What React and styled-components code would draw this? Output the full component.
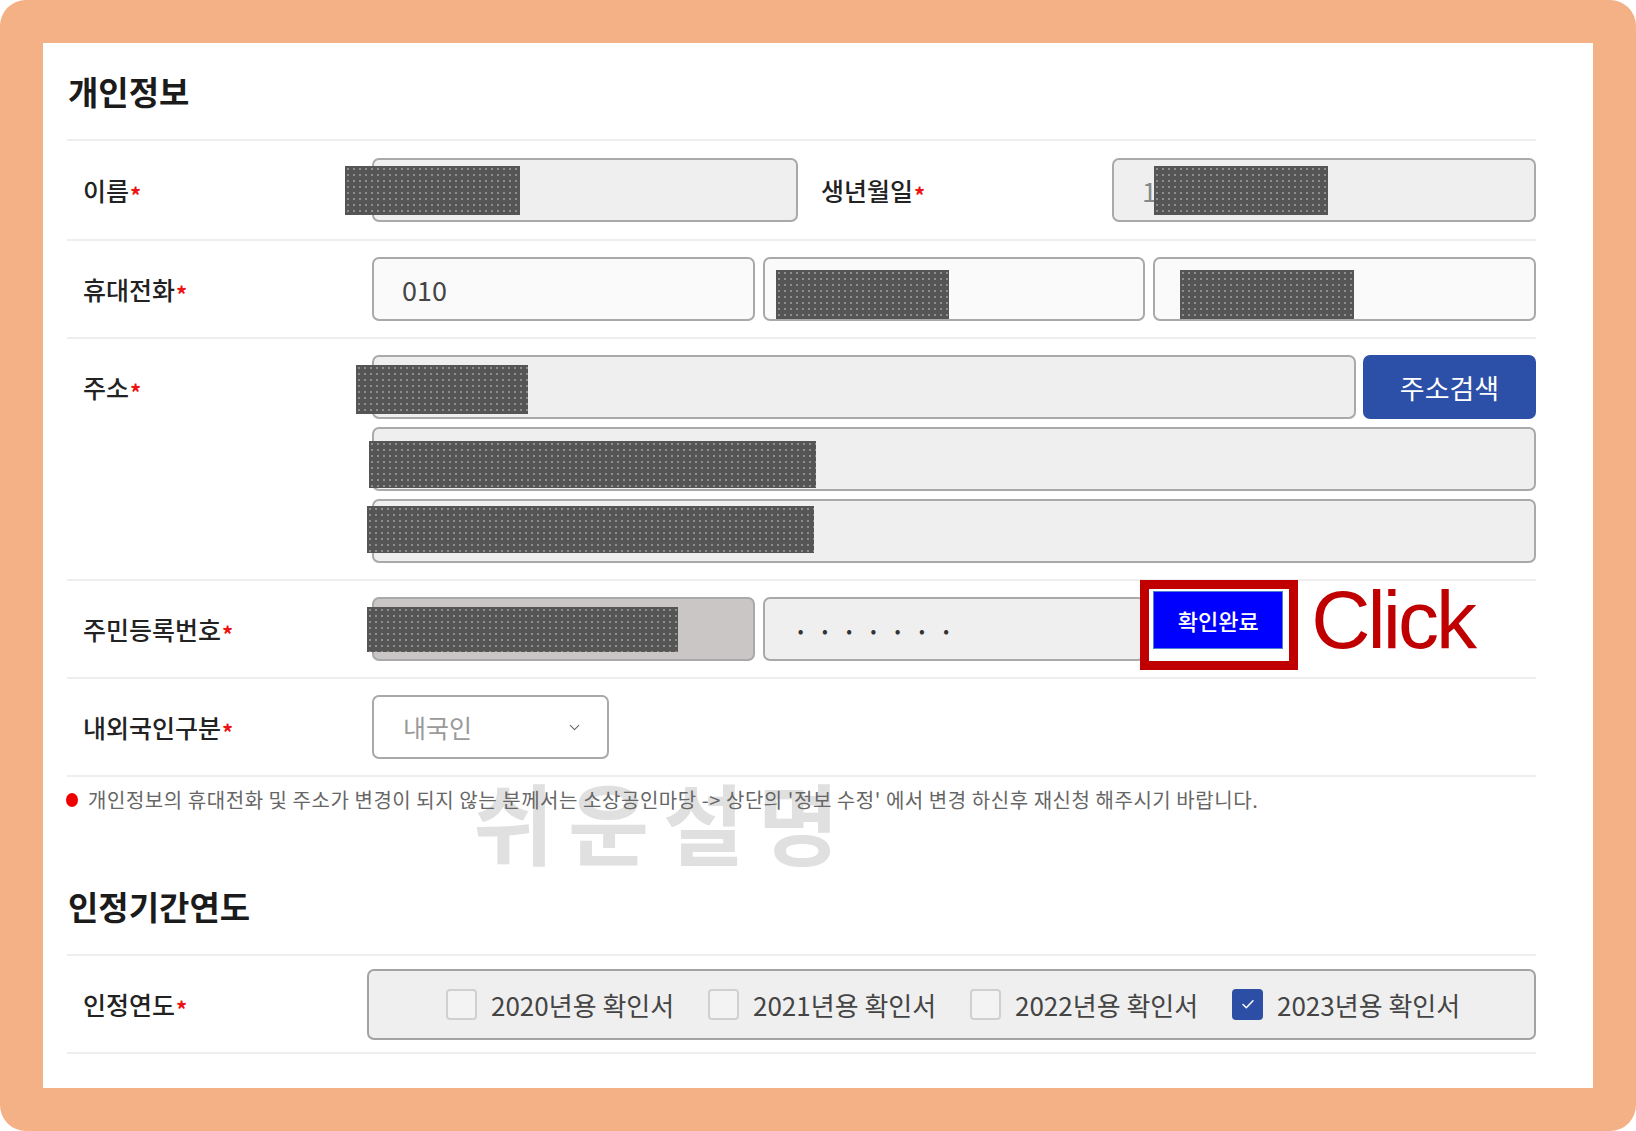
import React from 'react';
import styled, { createGlobalStyle } from 'styled-components';
import { ChevronDown } from 'lucide-react';

const GlobalStyle = createGlobalStyle`
  html, body {
    margin: 0;
    padding: 0;
    background: #ffffff;
  }
  body {
    font-family: "Noto Sans CJK KR", "Noto Sans", sans-serif;
  }
  * {
    box-sizing: border-box;
  }
`;

const Frame = styled.div`
  width: 1636px;
  height: 1131px;
  padding: 43px;
  background: #f3b185;
  border-radius: 26px;
`;

const Panel = styled.main`
  position: relative;
  height: 100%;
  padding: 0 57px 0 24px;
  background: #ffffff;
`;

const SectionTitle = styled.h2`
  display: flex;
  align-items: center;
  height: 98px;
  margin: ${p => p.$gap || 0}px 0 0;
  padding-left: 1px;
  font-size: 33px;
  font-weight: 700;
  color: #1b1b1b;
  border-bottom: 2px solid #eeeeee;
`;

const Row = styled.div`
  display: grid;
  grid-template-columns: 305px 1fr;
  align-items: ${p => (p.$top ? 'start' : 'center')};
  min-height: ${p => p.$min || 98}px;
  padding: ${p => p.$pad || '0'};
  border-bottom: 2px solid #eeeeee;
`;

const Label = styled.div`
  display: flex;
  align-items: center;
  height: 64px;
  padding-left: ${p => p.$indent ?? 16}px;
  font-size: 25px;
  font-weight: 500;
  color: #222222;
  white-space: nowrap;
`;

const Star = styled.span`
  display: inline-block;
  margin-left: 1px;
  font-size: 22px;
  font-weight: 700;
  line-height: 1;
  color: #ee1111;
  transform: translateY(4px);
`;

const SplitGrid = styled.div`
  display: grid;
  grid-template-columns: 426px 314px 1fr;
  align-items: center;
`;

const TripleGrid = styled.div`
  display: grid;
  grid-template-columns: repeat(3, 1fr);
  gap: 8px;
  align-items: center;
  align-self: ${p => (p.$stretch ? 'stretch' : 'auto')};
`;

const AddressGrid = styled.div`
  display: grid;
  grid-template-columns: 1fr 173px;
  gap: 8px 7px;
`;

const Field = styled.div`
  position: relative;
  display: flex;
  align-items: center;
  height: 64px;
  padding-left: ${p => p.$indent ?? 28}px;
  grid-column: ${p => (p.$full ? '1 / -1' : 'auto')};
  background: ${p => p.$bg || '#efefef'};
  border: 2px solid #a9a9a9;
  border-radius: 7px;
  font-size: 27px;
  color: ${p => p.$color || '#444444'};
`;

const Redact = styled.span`
  position: absolute;
  left: ${p => p.$l}px;
  top: ${p => p.$t}px;
  width: ${p => p.$w}px;
  height: ${p => p.$h || 49}px;
  background-color: #555555;
  background-image: radial-gradient(circle, #8d8d8d 0.8px, transparent 1.3px);
  background-size: 6px 6px;
`;

const Dots = styled.span`
  font-size: 17px;
  letter-spacing: 18.5px;
  color: #333333;
`;

const SearchButton = styled.button`
  height: 64px;
  border: none;
  border-radius: 7px;
  background: #2c50a7;
  color: #ffffff;
  font-family: inherit;
  font-size: 27px;
  font-weight: 400;
`;

const ConfirmCell = styled.div`
  position: relative;
  align-self: stretch;
  padding-top: 10px;
`;

const ConfirmButton = styled.button`
  display: block;
  width: 130px;
  height: 58px;
  border: 1px solid #4f7fd0;
  background: #0000ff;
  color: #ffffff;
  font-family: inherit;
  font-size: 22px;
  font-weight: 500;
`;

const Highlight = styled.span`
  position: absolute;
  left: -13px;
  top: -1px;
  width: 158px;
  height: 90px;
  border: 9px solid #c00000;
  pointer-events: none;
`;

const ClickNote = styled.span`
  position: absolute;
  left: 158px;
  top: -2px;
  font-family: "Liberation Sans", Arial, sans-serif;
  font-size: 82px;
  line-height: 1;
  letter-spacing: -3px;
  color: #c00000;
  white-space: nowrap;
`;

const Select = styled.div`
  display: flex;
  align-items: center;
  justify-content: space-between;
  width: 237px;
  height: 64px;
  padding: 0 24px 0 29px;
  background: #ffffff;
  border: 2px solid #a9a9a9;
  border-radius: 7px;
  font-size: 25px;
  color: #9a9a9a;
  svg {
    color: #666666;
  }
`;

const Notice = styled.p`
  position: relative;
  z-index: 1;
  display: flex;
  align-items: center;
  gap: 10px;
  margin: 0;
  padding: 12px 0 0 0;
  line-height: 22px;
  font-size: 20px;
  letter-spacing: 0.55px;
  color: #666666;
  white-space: nowrap;
`;

const RedDot = styled.span`
  flex: none;
  width: 12px;
  height: 14px;
  margin-left: -1px;
  border-radius: 50%;
  background: #ee0000;
`;

const Watermark = styled.span`
  position: absolute;
  left: 430px;
  top: 733px;
  z-index: 0;
  font-size: 88px;
  font-weight: 700;
  line-height: 1;
  letter-spacing: 14px;
  color: #e0e0e0;
  pointer-events: none;
`;

const YearBox = styled.div`
  display: grid;
  grid-auto-flow: column;
  grid-auto-columns: 262px;
  align-items: center;
  height: 71px;
  margin-left: -5px;
  padding-left: 77px;
  background: #efefef;
  border: 2px solid #a3a3a3;
  border-radius: 7px;
`;

const YearOption = styled.label`
  display: flex;
  align-items: center;
  gap: 14px;
  font-size: 26px;
  color: #444444;
  white-space: nowrap;
`;

const Box = styled.span`
  display: flex;
  align-items: center;
  justify-content: center;
  width: 31px;
  height: 31px;
  border: 2px solid ${p => (p.$on ? '#2c4fa5' : '#d0d0d0')};
  border-radius: 4px;
  background: ${p => (p.$on ? '#2c4fa5' : '#f3f3f3')};
`;

const years = [
  { y: 2020, on: false },
  { y: 2021, on: false },
  { y: 2022, on: false },
  { y: 2023, on: true },
];

function Req({ children }) {
  return (
    <>
      {children}
      <Star>*</Star>
    </>
  );
}

function App() {
  return (
    <>
      <GlobalStyle />
      <Frame>
        <Panel>
          <SectionTitle>개인정보</SectionTitle>

          <Row $min={100}>
            <Label><Req>이름</Req></Label>
            <SplitGrid>
              <Field>
                <Redact $l={-29} $t={6} $w={175} />
              </Field>
              <Label $indent={23}><Req>생년월일</Req></Label>
              <Field $indent={28} $color="#888888">
                1
                <Redact $l={40} $t={6} $w={174} />
              </Field>
            </SplitGrid>
          </Row>

          <Row>
            <Label><Req>휴대전화</Req></Label>
            <TripleGrid>
              <Field $bg="#fafafa">010</Field>
              <Field $bg="#fafafa">
                <Redact $l={11} $t={11} $w={173} />
              </Field>
              <Field $bg="#fafafa">
                <Redact $l={25} $t={11} $w={174} />
              </Field>
            </TripleGrid>
          </Row>

          <Row $top $pad="16px 0 16px">
            <Label><Req>주소</Req></Label>
            <AddressGrid>
              <Field>
                <Redact $l={-18} $t={8} $w={172} />
              </Field>
              <SearchButton type="button">주소검색</SearchButton>
              <Field $full>
                <Redact $l={-5} $t={12} $w={447} $h={47} />
              </Field>
              <Field $full>
                <Redact $l={-7} $t={5} $w={447} $h={47} />
              </Field>
            </AddressGrid>
          </Row>

          <Row>
            <Label><Req>주민등록번호</Req></Label>
            <TripleGrid $stretch>
              <Field $bg="#cac6c6">
                <Redact $l={-7} $t={8} $w={311} $h={45} />
              </Field>
              <Field $indent={33}>
                <Dots>•••••••</Dots>
              </Field>
              <ConfirmCell>
                <ConfirmButton type="button">확인완료</ConfirmButton>
                <Highlight />
                <ClickNote>Click</ClickNote>
              </ConfirmCell>
            </TripleGrid>
          </Row>

          <Row>
            <Label><Req>내외국인구분</Req></Label>
            <Select>
              내국인
              <ChevronDown size={17} strokeWidth={1.6} />
            </Select>
          </Row>

          <Watermark>쉬운설명</Watermark>
          <Notice>
            <RedDot />
            개인정보의 휴대전화 및 주소가 변경이 되지 않는 분께서는 소상공인마당 -&gt; 상단의 '정보 수정' 에서 변경 하신후 재신청 해주시기 바랍니다.
          </Notice>

          <SectionTitle $gap={47}>인정기간연도</SectionTitle>

          <Row>
            <Label><Req>인정연도</Req></Label>
            <YearBox>
              {years.map(item => (
                <YearOption key={item.y}>
                  <Box $on={item.on}>
                    {item.on && (
                      <svg width="18" height="18" viewBox="0 0 18 18" fill="none">
                        <path d="M4 9.5l3.3 3.3L14 5.8" stroke="#ffffff" strokeWidth="1.5" strokeLinecap="round" strokeLinejoin="round" />
                      </svg>
                    )}
                  </Box>
                  {item.y}년용 확인서
                </YearOption>
              ))}
            </YearBox>
          </Row>
        </Panel>
      </Frame>
    </>
  );
}

export default App;
